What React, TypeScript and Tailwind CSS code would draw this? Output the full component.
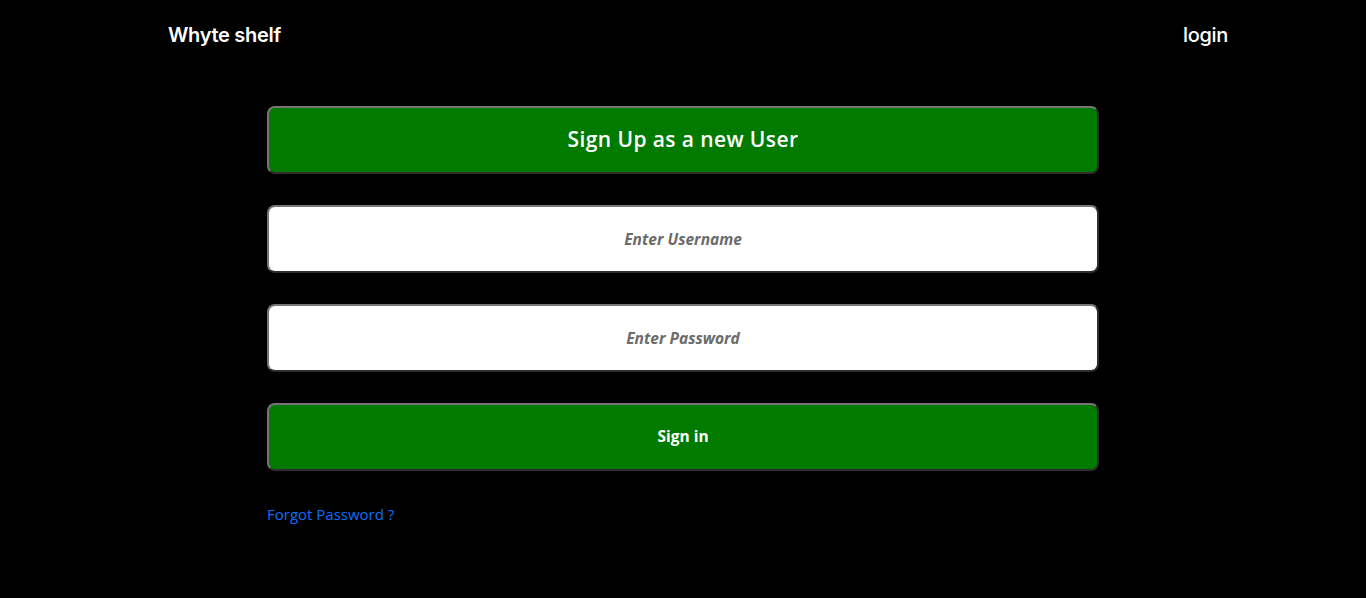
export default function App() {
  const box =
    "w-full h-[68px] rounded-lg border-2 border-t-[#767676] border-l-[#767676] border-b-[#2e2e2e] border-r-[#2e2e2e]";

  return (
    <div className="min-h-[598px] bg-black font-['Open_Sans',sans-serif]">
      {/* Header */}
      <header className="flex items-center justify-between pl-[168px] pr-[138px] pt-[20px]">
        <span className="font-['Inter',sans-serif] text-[20px] font-semibold tracking-[-0.3px] text-white">
          Whyte shelf
        </span>
        <span className="font-['Inter',sans-serif] text-[20px] font-medium tracking-[-0.3px] text-white">
          login
        </span>
      </header>

      {/* Form */}
      <main className="mx-auto mt-[56px] flex w-[832px] flex-col gap-[31px]">
        <button className={`${box} bg-[#007b00] text-[21px] font-semibold tracking-[0.4px] text-white`}>
          Sign Up as a new User
        </button>
        <input
          className={`${box} bg-white text-center text-[15.5px] font-bold italic text-[#6b6b6b] placeholder:text-[#6b6b6b] outline-none`}
          placeholder="Enter Username"
        />
        <input
          type="password"
          className={`${box} bg-white text-center text-[15.5px] font-bold italic text-[#6b6b6b] placeholder:text-[#6b6b6b] outline-none`}
          placeholder="Enter Password"
        />
        <button className={`${box} bg-[#007b00] text-[15.5px] font-bold text-white`}>
          Sign in
        </button>
        <a href="#" className="mt-[1px] text-[15px] text-[#0d6efd]">
          Forgot Password ?
        </a>
      </main>
    </div>
  );
}
